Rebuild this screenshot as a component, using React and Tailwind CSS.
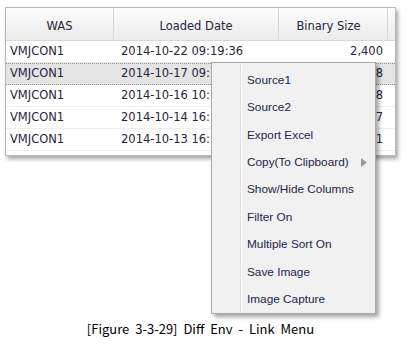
import React from "react";

const rows = [
  ["VMJCON1", "2014-10-22 09:19:36", "2,400", false],
  ["VMJCON1", "2014-10-17 09:19:36", "1,848", true],
  ["VMJCON1", "2014-10-16 10:19:36", "1,848", false],
  ["VMJCON1", "2014-10-14 16:19:36", "2,407", false],
  ["VMJCON1", "2014-10-13 16:19:36", "2,401", false],
];

const items = [
  "Source1",
  "Source2",
  "Export Excel",
  "Copy(To Clipboard)",
  "Show/Hide Columns",
  "Filter On",
  "Multiple Sort On",
  "Save Image",
  "Image Capture",
];

export default function App() {
  return (
    <div className="relative w-[413px] h-[357px] bg-white overflow-hidden" style={{ fontFamily: "'Liberation Sans', Arial, sans-serif" }}>
      <div className="pt-[7px] pl-[5px]">
        <div className="w-[391px] h-[149px] border border-[#b8b8b8] bg-white shadow-[2px_3px_4px_rgba(0,0,0,0.35)] text-[#26263a] text-[11.5px]" style={{ fontFamily: "'DejaVu Sans', Verdana, sans-serif" }}>
          <div className="flex h-[33px] bg-gradient-to-b from-[#fdfdfd] to-[#ebebeb] border-b border-[#d8d8d8]">
            <div className="w-[108px] flex items-center justify-center border-r border-[#d6d6d6] pt-[6px]">WAS</div>
            <div className="w-[165px] flex items-center justify-center border-r border-[#d6d6d6] pt-[6px]">Loaded Date</div>
            <div className="w-[109px] flex items-center justify-center border-r border-[#d6d6d6] pt-[6px] pr-[9px]">Binary Size</div>
            <div className="flex-1"></div>
          </div>
          <div>
            {rows.map((r, i) => (
              <div
                key={i}
                className={
                  "flex h-[22px] items-center " +
                  (r[3]
                    ? "bg-[#e4e4e4] border-y border-dotted border-[#8a8a8a]"
                    : "border-b border-[#eeeeee]")
                }
              >
                <div className="w-[108px] pl-[4px]">{r[0]}</div>
                <div className="w-[165px] pl-[7px]">{r[1]}</div>
                <div className="w-[108px] pr-[4px] text-right">{r[2]}</div>
              </div>
            ))}
          </div>
        </div>
      </div>

      <div className="absolute left-[211px] top-[62px] w-[165px] h-[252px] bg-[#f1f1f1] border border-[#a9a9a9] shadow-[3px_3px_4px_rgba(0,0,0,0.35)] text-[11.8px] text-[#24244a]">
        <div className="absolute left-[28px] top-[2px] bottom-[2px] w-[2px] border-l border-[#e0e0e0] border-r border-r-white"></div>
        <div className="flex flex-col pt-[4px]">
          {items.map((t, i) => (
            <div key={i} className="h-[27.4px] flex items-center pl-[35px] relative">
              {t}
              {i === 3 && (
                <svg className="absolute left-[149px] top-[9px]" width="6" height="9" viewBox="0 0 6 9">
                  <path d="M0 0 L6 4.5 L0 9 Z" fill="#9a9a9a" />
                </svg>
              )}
            </div>
          ))}
        </div>
      </div>

      <div className="absolute left-0 right-0 top-[319px] text-center text-[13px] text-black pr-[12px]" style={{ fontFamily: "'Noto Sans CJK KR', 'Noto Sans', sans-serif", wordSpacing: "3px" }}>
        [Figure 3-3-29] Diff Env - Link Menu
      </div>
    </div>
  );
}
